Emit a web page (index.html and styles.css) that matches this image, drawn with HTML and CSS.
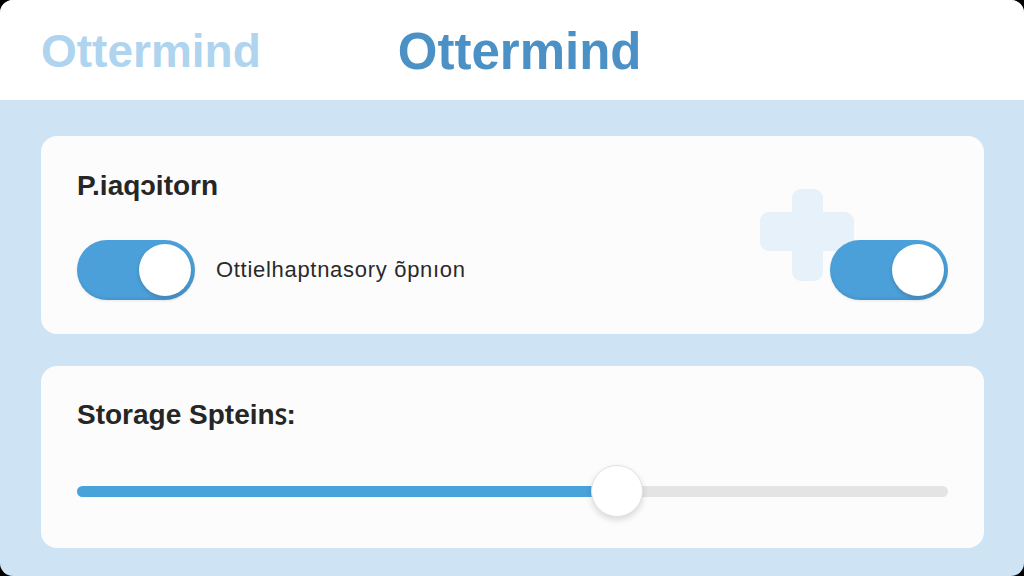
FILE: index.html
```html
<!DOCTYPE html>
<html lang="en">
<head>
    <meta charset="UTF-8">
    <meta name="viewport" content="width=device-width, initial-scale=1.0">
    <title>Ottermind Settings</title>
    <link rel="stylesheet" href="styles.css">
</head>
<body>
    <div class="app">
        <header class="top-bar">
            <span class="brand brand-faded">Ottermind</span>
            <span class="brand brand-main">Ottermind</span>
        </header>

        <main class="settings">
            <section class="card card-options">
                <!-- faint plus mark behind the second switch -->
                <svg class="plus-mark" width="94" height="92" viewBox="0 0 94 92">
                    <rect x="32" y="0" width="31" height="92" rx="9" fill="#e7f1fa"/>
                    <rect x="0" y="23" width="94" height="39" rx="9" fill="#e7f1fa"/>
                </svg>
                <h2 class="card-title">P.iaqɔitorn</h2>
                <div class="option-row">
                    <div class="option">
                        <div class="toggle on"><span class="knob"></span></div>
                        <span class="option-label">Ottielhaptnasory õpnıon</span>
                    </div>
                    <div class="toggle on"><span class="knob"></span></div>
                </div>
            </section>

            <section class="card card-storage">
                <h2 class="card-title">Storage Spteinꜱ:</h2>
                <div class="slider">
                    <div class="slider-track">
                        <div class="slider-fill" style="width: 62%"></div>
                        <span class="slider-thumb" style="left: 62%"></span>
                    </div>
                </div>
            </section>
        </main>
    </div>
</body>
</html>
```

FILE: styles.css
```css
* {
    margin: 0;
    padding: 0;
    box-sizing: border-box;
}

html {
    background: #000;
}

body {
    width: 1024px;
    height: 576px;
    overflow: hidden;
    font-family: "Liberation Sans", Arial, sans-serif;
}

.app {
    height: 100%;
    display: flex;
    flex-direction: column;
    background: #cee4f5;
    border-radius: 13px;
    overflow: hidden;
}

/* Header */
.top-bar {
    height: 100px;
    flex-shrink: 0;
    display: flex;
    align-items: center;
    gap: 137px;
    padding: 2px 0 0 41px;
    background: #ffffff;
}

.brand {
    font-weight: bold;
}

.brand-faded {
    font-size: 46px;
    color: #aed4ef;
}

.brand-main {
    font-size: 51px;
    color: #4b91c6;
}

/* Cards */
.settings {
    flex: 1;
    display: flex;
    flex-direction: column;
    gap: 32px;
    padding: 36px 40px 28px 41px;
}

.card {
    position: relative;
    background: #fcfcfc;
    border-radius: 16px;
    padding: 0 36px;
}

.card-options {
    height: 198px;
    padding-top: 34px;
}

.card-storage {
    height: 182px;
    padding-top: 33px;
}

.card-title {
    position: relative;
    font-size: 28px;
    line-height: 32px;
    font-weight: bold;
    color: #262626;
}

.plus-mark {
    position: absolute;
    left: 719px;
    top: 53px;
    filter: blur(0.6px);
}

.option-row {
    position: relative;
    display: flex;
    align-items: center;
    justify-content: space-between;
    margin-top: 38px;
}

.option {
    display: flex;
    align-items: center;
    gap: 21px;
}

.option-label {
    font-size: 22px;
    letter-spacing: 0.7px;
    color: #2a2a2a;
}

/* Switch */
.toggle {
    position: relative;
    width: 118px;
    height: 60px;
    border-radius: 30px;
    background: #d8d8d8;
    box-shadow: inset 0 -2px 3px rgba(0, 0, 0, 0.08), 0 1px 3px rgba(0, 0, 0, 0.08);
}

.toggle.on {
    background: #4ca0da;
}

.toggle .knob {
    position: absolute;
    top: 4px;
    left: 4px;
    width: 52px;
    height: 52px;
    border-radius: 50%;
    background: #ffffff;
    box-shadow: 0 2px 4px rgba(0, 0, 0, 0.18);
}

.toggle.on .knob {
    left: auto;
    right: 4px;
}

/* Slider */
.slider {
    height: 52px;
    margin-top: 34px;
    display: flex;
    align-items: center;
}

.slider-track {
    position: relative;
    width: 100%;
    height: 11px;
    border-radius: 6px;
    background: #e4e4e4;
}

.slider-fill {
    height: 100%;
    border-radius: 6px 0 0 6px;
    background: #4aa2da;
}

.slider-thumb {
    position: absolute;
    top: 50%;
    width: 52px;
    height: 52px;
    margin: -26px 0 0 -26px;
    border-radius: 50%;
    background: #ffffff;
    border: 1px solid #e2e2e2;
    box-shadow: 0 3px 6px rgba(0, 0, 0, 0.14);
}
```
